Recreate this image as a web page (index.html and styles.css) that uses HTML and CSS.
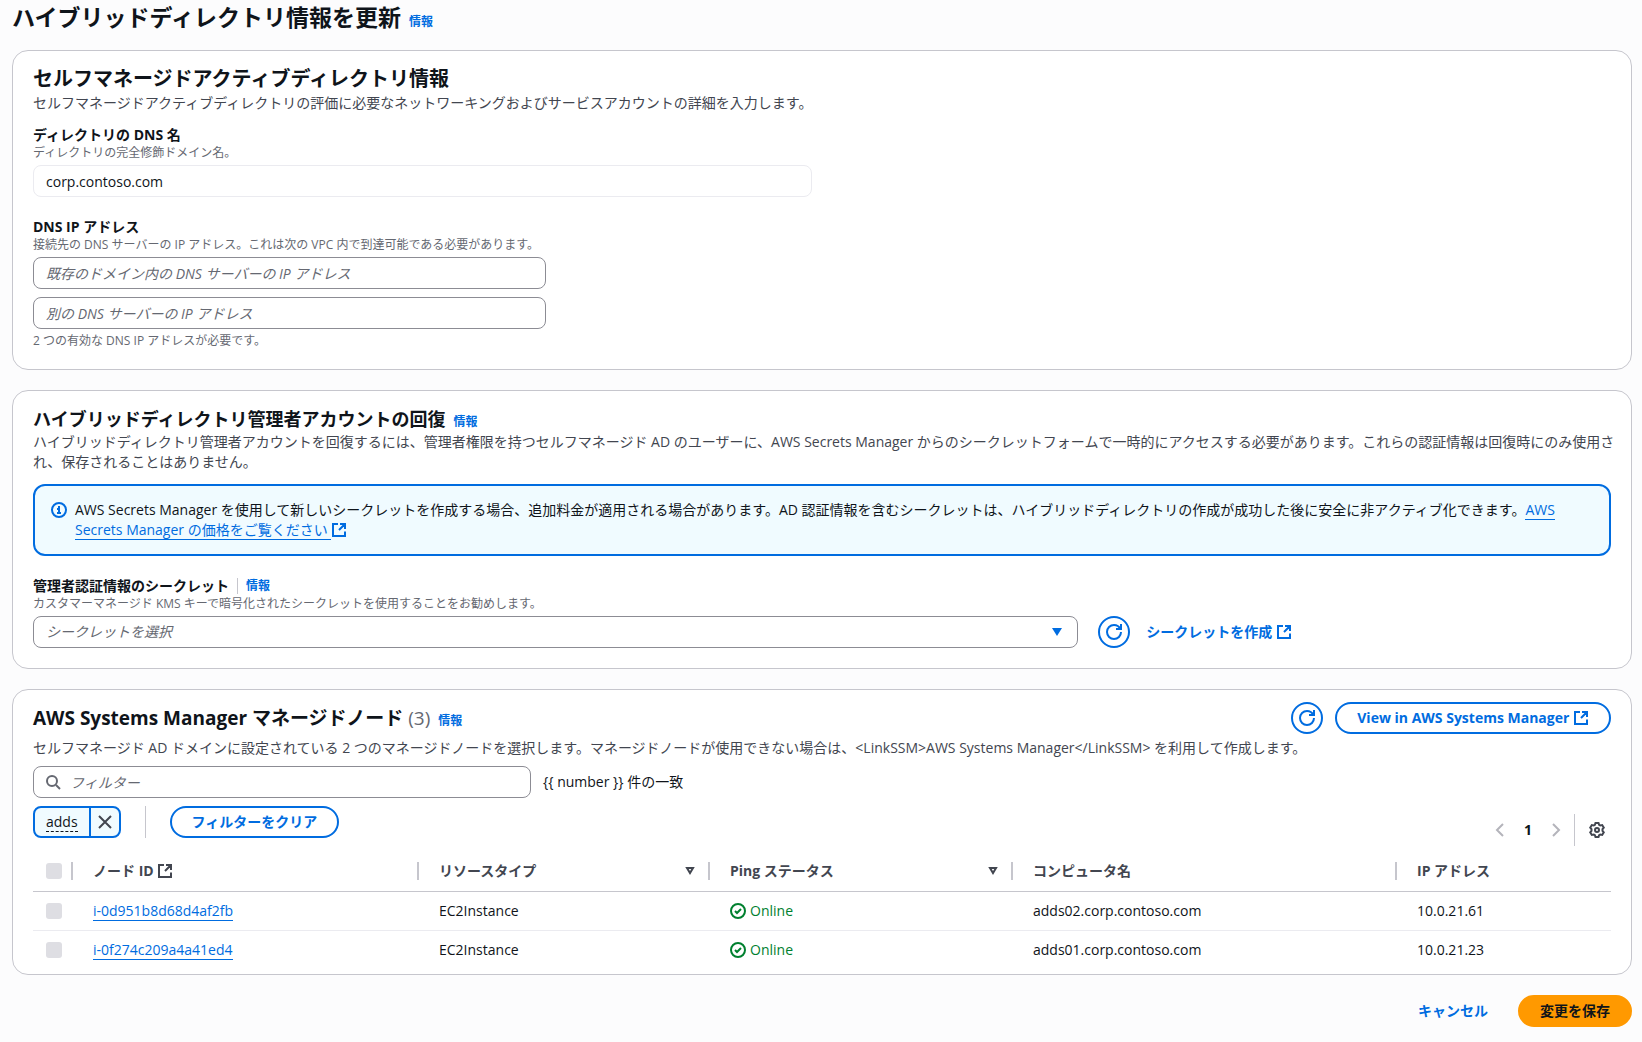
FILE: index.html
```html
<!DOCTYPE html>
<html lang="ja">
<head>
  <meta charset="UTF-8" />
  <meta name="viewport" content="width=device-width, initial-scale=1.0"/>
  <title>ハイブリッドディレクトリ情報を更新</title>
  <link rel="stylesheet" href="styles.css">
</head>
<body>

<!-- Shared icons -->
<svg class="sprite" aria-hidden="true">
  <symbol id="external" viewBox="0 0 16 16"><path d="M7 2H2v12h12V9.500M9 2h5v5M14 2 8 8" /></symbol>
  <symbol id="refresh" viewBox="0 0 16 16"><path d="M15 8c0 3.870-3.130 7-7 7s-7-3.130-7-7 3.130-7 7-7c2.790 0 5.200 1.630 6.330 4M10 5h5V0" /></symbol>
  <symbol id="info" viewBox="0 0 16 16"><circle cx="8" cy="8" r="7" /><path d="M8 11V7H6M6 11h4M8 4v2" /></symbol>
  <symbol id="check" viewBox="0 0 16 16"><circle cx="8" cy="8" r="7" /><path d="m5 8 2 2 4-4" /></symbol>
  <symbol id="search" viewBox="0 0 16 16"><circle cx="7" cy="7" r="5" /><path d="m11 11 4 4" /></symbol>
  <symbol id="close" viewBox="0 0 16 16"><path d="m2 2 12 12M14 2 2 14" /></symbol>
  <symbol id="left" viewBox="0 0 16 16"><path d="M11 2 5 8l6 6" /></symbol>
  <symbol id="right" viewBox="0 0 16 16"><path d="m5 2 6 6-6 6" /></symbol>
  <symbol id="sort" viewBox="0 0 16 16"><path d="M5 5h6l-3 5z" /></symbol>
  <symbol id="gear" viewBox="0 0 16 16"><path d="M6.500 1h3l.6 1.900 1.100.6 2-.4 1.600 2.600-1.300 1.500v1.600l1.300 1.500-1.600 2.600-2-.4-1.100.6L9.500 15h-3l-.6-1.900-1.100-.6-2 .4-1.600-2.600 1.300-1.500V7.200L1.200 5.700l1.600-2.600 2 .4 1.100-.6z" /><circle cx="8" cy="8" r="2" /></symbol>
</svg>

<header class="page-header">
  <h1>ハイブリッドディレクトリ情報を更新</h1>
  <a href="#" class="info-link">情報</a>
</header>

<main>
  <!-- Self-managed directory -->
  <section class="card">
    <h2 class="title-large">セルフマネージドアクティブディレクトリ情報</h2>
    <p class="description">セルフマネージドアクティブディレクトリの評価に必要なネットワーキングおよびサービスアカウントの詳細を入力します。</p>

    <div class="field first">
      <label for="dnsName">ディレクトリの DNS 名</label>
      <p class="hint">ディレクトリの完全修飾ドメイン名。</p>
      <div class="columns-2">
        <input type="text" id="dnsName" class="readonly" value="corp.contoso.com" readonly />
      </div>
    </div>

    <div class="field">
      <label for="dnsIp1">DNS IP アドレス</label>
      <p class="hint">接続先の DNS サーバーの IP アドレス。これは次の VPC 内で到達可能である必要があります。</p>
      <div class="columns-3">
        <div class="ip-inputs">
          <input type="text" id="dnsIp1" placeholder="既存のドメイン内の DNS サーバーの IP アドレス" />
          <input type="text" id="dnsIp2" aria-label="別の DNS サーバーの IP アドレス" placeholder="別の DNS サーバーの IP アドレス" />
        </div>
      </div>
      <p class="hint below">2 つの有効な DNS IP アドレスが必要です。</p>
    </div>
  </section>

  <!-- Administrator account recovery -->
  <section class="card">
    <div class="card-title">
      <h2>ハイブリッドディレクトリ管理者アカウントの回復</h2>
      <a href="#" class="info-link">情報</a>
    </div>
    <p class="description">ハイブリッドディレクトリ管理者アカウントを回復するには、管理者権限を持つセルフマネージド AD のユーザーに、AWS Secrets Manager からのシークレットフォームで一時的にアクセスする必要があります。これらの認証情報は回復時にのみ使用され、保存されることはありません。</p>

    <div class="alert">
      <svg class="icon"><use href="#info" /></svg>
      <p>AWS Secrets Manager を使用して新しいシークレットを作成する場合、追加料金が適用される場合があります。AD 認証情報を含むシークレットは、ハイブリッドディレクトリの作成が成功した後に安全に非アクティブ化できます。<a href="#" class="text-link">AWS Secrets Manager の価格をご覧ください </a><svg class="icon"><use href="#external" /></svg></p>
    </div>

    <div class="field">
      <div class="label-row">
        <label for="secret">管理者認証情報のシークレット</label>
        <a href="#" class="info-link">情報</a>
      </div>
      <p class="hint">カスタマーマネージド KMS キーで暗号化されたシークレットを使用することをお勧めします。</p>
      <div class="columns-3">
        <div class="select-wrap">
          <select id="secret" required>
            <option value="">シークレットを選択</option>
          </select>
        </div>
        <div class="secret-actions">
          <button type="button" class="btn round" aria-label="更新"><svg class="icon"><use href="#refresh" /></svg></button>
          <a href="#" class="action-link">シークレットを作成 <svg class="icon"><use href="#external" /></svg></a>
        </div>
      </div>
    </div>
  </section>

  <!-- Managed nodes -->
  <section class="card nodes">
    <div class="nodes-header">
      <div class="card-title">
        <h2 class="title-nodes">AWS Systems Manager マネージドノード <span class="count">(3)</span></h2>
        <a href="#" class="info-link">情報</a>
      </div>
      <div class="actions">
        <button type="button" class="btn round" aria-label="更新"><svg class="icon"><use href="#refresh" /></svg></button>
        <button type="button" class="btn">View in AWS Systems Manager <svg class="icon"><use href="#external" /></svg></button>
      </div>
    </div>
    <p class="description">セルフマネージド AD ドメインに設定されている 2 つのマネージドノードを選択します。マネージドノードが使用できない場合は、&lt;LinkSSM&gt;AWS Systems Manager&lt;/LinkSSM&gt; を利用して作成します。</p>

    <div class="filter-row">
      <div class="search">
        <svg class="icon"><use href="#search" /></svg>
        <input type="text" aria-label="フィルター" placeholder="フィルター" />
      </div>
      <span>{{ number }} 件の一致</span>
    </div>

    <div class="toolbar">
      <div class="tokens">
        <div class="token">
          <button type="button" class="token-text"><span>adds</span></button>
          <button type="button" class="token-remove" aria-label="adds を削除"><svg class="icon"><use href="#close" /></svg></button>
        </div>
        <span class="divider"></span>
        <button type="button" class="btn">フィルターをクリア</button>
      </div>
      <div class="pagination">
        <button type="button" class="icon-btn" aria-label="前のページ" disabled><svg class="icon"><use href="#left" /></svg></button>
        <button type="button" class="icon-btn page">1</button>
        <button type="button" class="icon-btn" aria-label="次のページ" disabled><svg class="icon"><use href="#right" /></svg></button>
        <span class="divider"></span>
        <button type="button" class="icon-btn settings" aria-label="設定"><svg class="icon"><use href="#gear" /></svg></button>
      </div>
    </div>

    <table>
      <colgroup>
        <col class="col-check">
        <col class="col-id">
        <col class="col-type">
        <col class="col-ping">
        <col class="col-name">
        <col>
      </colgroup>
      <thead>
        <tr>
          <th class="check"><div class="th"><input type="checkbox" aria-label="すべて選択" disabled /></div></th>
          <th><div class="th"><span>ノード ID <svg class="icon"><use href="#external" /></svg></span></div></th>
          <th><div class="th">リソースタイプ <svg class="icon sort"><use href="#sort" /></svg></div></th>
          <th><div class="th">Ping ステータス <svg class="icon sort"><use href="#sort" /></svg></div></th>
          <th><div class="th">コンピュータ名</div></th>
          <th><div class="th">IP アドレス</div></th>
        </tr>
      </thead>
      <tbody>
        <tr>
          <td class="check"><input type="checkbox" aria-label="i-0d951b8d68d4af2fb" disabled /></td>
          <td><a href="#" class="text-link">i-0d951b8d68d4af2fb</a></td>
          <td>EC2Instance</td>
          <td><span class="status"><svg class="icon"><use href="#check" /></svg>Online</span></td>
          <td>adds02.corp.contoso.com</td>
          <td>10.0.21.61</td>
        </tr>
        <tr>
          <td class="check"><input type="checkbox" aria-label="i-0f274c209a4a41ed4" disabled /></td>
          <td><a href="#" class="text-link">i-0f274c209a4a41ed4</a></td>
          <td>EC2Instance</td>
          <td><span class="status"><svg class="icon"><use href="#check" /></svg>Online</span></td>
          <td>adds01.corp.contoso.com</td>
          <td>10.0.21.23</td>
        </tr>
      </tbody>
    </table>
  </section>
</main>

<footer>
  <button type="button" class="btn plain">キャンセル</button>
  <button type="submit" class="btn primary">変更を保存</button>
</footer>

</body>
</html>
```
FILE: styles.css
```css
* {
  box-sizing: border-box;
}

body {
  margin: 0;
  padding: 2px 10px 14px 12px;
  font-family: "Open Sans", "Noto Sans CJK JP", sans-serif;
  font-size: 14px;
  line-height: 20px;
  color: #0f141a;
  background-color: #fcfcfd;
}

h1, h2, p {
  margin: 0;
}

h1 {
  font-size: 23px;
  line-height: 30px;
}

h2 {
  font-size: 18px;
  line-height: 24px;
}

a {
  color: #006ce0;
  text-decoration: none;
}

input, select, button {
  font: inherit;
  color: inherit;
}

.sprite {
  display: none;
}

.icon {
  width: 16px;
  height: 16px;
  flex: none;
  fill: none;
  stroke: currentColor;
  stroke-width: 2px;
  vertical-align: -3px;
}

.page-header, .card-title {
  display: flex;
  align-items: baseline;
  gap: 8px;
}

.page-header {
  margin-bottom: 18px;
}

.info-link {
  font-size: 12px;
  font-weight: bold;
}

main {
  display: flex;
  flex-direction: column;
  gap: 20px;
}

.card {
  background: white;
  padding: 16px 20px 20px;
  border: 1px solid #c6c6cd;
  border-radius: 16px;
}

.title-large {
  margin-bottom: 2px;
  font-size: 20px;
}

.title-nodes {
  font-size: 19px;
}

.description {
  margin-right: -8px;
  color: #424650;
}

/* Form fields */
.field {
  margin-top: 20px;
}

.field.first {
  margin-top: 12px;
}

label {
  display: block;
  font-weight: bold;
}

.hint {
  margin-bottom: 4px;
  font-size: 12px;
  line-height: 16px;
  color: #656871;
}

.hint.below {
  margin: 4px 0 0;
}

.label-row {
  display: flex;
  align-items: center;
  gap: 8px;
}

.label-row .info-link {
  line-height: 16px;
  padding-left: 8px;
  border-left: 1px solid #c6c6cd;
}

.columns-2 {
  display: grid;
  grid-template-columns: 1fr 1fr;
  gap: 20px;
}

.columns-3 {
  display: grid;
  grid-template-columns: 1fr 1fr 1fr;
  gap: 20px;
}

.ip-inputs {
  display: flex;
  flex-direction: column;
  gap: 8px;
}

input[type="text"], select {
  width: 100%;
  height: 32px;
  padding: 4px 12px;
  background: white;
  border: 1px solid #8c8c94;
  border-radius: 8px;
}

input.readonly {
  border-color: #ebebf0;
}

input::placeholder {
  color: #656871;
  font-style: italic;
  opacity: 1;
}

.select-wrap {
  grid-column: span 2;
  position: relative;
}

.select-wrap::after {
  content: "";
  position: absolute;
  right: 16px;
  top: 12px;
  border: 5px solid transparent;
  border-top: 8px solid #006ce0;
  border-bottom: 0;
  pointer-events: none;
}

select {
  appearance: none;
}

select:invalid {
  color: #656871;
  font-style: italic;
}

.secret-actions {
  display: flex;
  align-items: center;
  gap: 16px;
}

.action-link {
  font-weight: bold;
}

/* Info alert */
.alert {
  display: flex;
  gap: 8px;
  margin-top: 12px;
  padding: 14px 16px;
  background: #f0fbff;
  border: 2px solid #006ce0;
  border-radius: 12px;
}

.alert > .icon {
  margin-top: 2px;
  color: #006ce0;
}

.alert p .icon {
  color: #006ce0;
}

.text-link {
  border-bottom: 1px solid #006ce0;
}

/* Buttons */
.btn {
  height: 32px;
  padding: 0 20px;
  font-weight: bold;
  color: #006ce0;
  background: white;
  border: 2px solid #006ce0;
  border-radius: 20px;
  cursor: pointer;
}

.btn.round {
  display: flex;
  align-items: center;
  justify-content: center;
  width: 32px;
  padding: 0;
}

.btn.plain {
  background: transparent;
  border-color: transparent;
}

.btn.primary {
  color: #0f141a;
  background: #ff9900;
  border-color: #ff9900;
}

/* Managed nodes */
.card.nodes {
  padding: 12px 20px 5px;
}

.nodes-header {
  display: flex;
  justify-content: space-between;
  align-items: center;
  margin-bottom: 4px;
}

.count {
  font-weight: normal;
  color: #656871;
}

.actions {
  display: flex;
  gap: 12px;
}

.filter-row {
  display: flex;
  align-items: center;
  gap: 12px;
  margin-top: 8px;
}

.search {
  position: relative;
  width: 498px;
}

.search .icon {
  position: absolute;
  left: 12px;
  top: 8px;
  color: #656871;
}

.search input[type="text"] {
  padding-left: 36px;
}

.toolbar {
  display: flex;
  justify-content: space-between;
  margin-top: 8px;
}

.tokens {
  display: flex;
  align-items: flex-start;
  gap: 24px;
}

.divider {
  width: 1px;
  height: 32px;
  background: #c6c6cd;
}

.token {
  display: flex;
  height: 32px;
  background: #f0fbff;
  border: 2px solid #006ce0;
  border-radius: 8px;
}

.token button {
  border: none;
  background: none;
  cursor: pointer;
}

.token-text {
  padding: 0 11px;
}

.token-text span {
  border-bottom: 1px dashed #0f141a;
}

.token .token-remove {
  padding: 0 6px;
  color: #424650;
  border-left: 2px solid #006ce0;
}

.pagination {
  display: flex;
  align-items: center;
  margin-top: 8px;
}

.icon-btn {
  width: 28px;
  height: 32px;
  padding: 0;
  color: #424650;
  background: none;
  border: none;
  cursor: pointer;
}

.icon-btn:disabled {
  color: #b4b4bb;
}

.icon-btn.page {
  font-weight: bold;
  color: #0f141a;
}

.pagination .divider {
  margin: 0 8px 0 4px;
}

/* Table */
table {
  width: 100%;
  margin-top: 6px;
  table-layout: fixed;
  border-collapse: collapse;
}

.col-check {
  width: 40px;
}

.col-id {
  width: 346px;
}

.col-type {
  width: 291px;
}

.col-ping {
  width: 303px;
}

.col-name {
  width: 384px;
}

th, td {
  height: 39px;
  padding: 0 0 0 20px;
  text-align: left;
}

th {
  color: #424650;
  border-bottom: 1px solid #c6c6cd;
}

tbody tr + tr td {
  border-top: 1px solid #ebebf0;
}

.th {
  display: flex;
  align-items: center;
  justify-content: space-between;
  height: 18px;
  padding-right: 10px;
  border-right: 2px solid #c6c6cd;
}

th:last-child .th {
  border-right: none;
}

.check {
  padding-left: 13px;
}

.check .th {
  padding: 0;
}

input[type="checkbox"] {
  appearance: none;
  display: block;
  width: 16px;
  height: 16px;
  margin: 0;
  background: #dedee3;
  border-radius: 3px;
}

.status {
  display: flex;
  align-items: center;
  gap: 4px;
  color: #00802f;
}

footer {
  display: flex;
  justify-content: flex-end;
  gap: 8px;
  margin-top: 20px;
}
```
